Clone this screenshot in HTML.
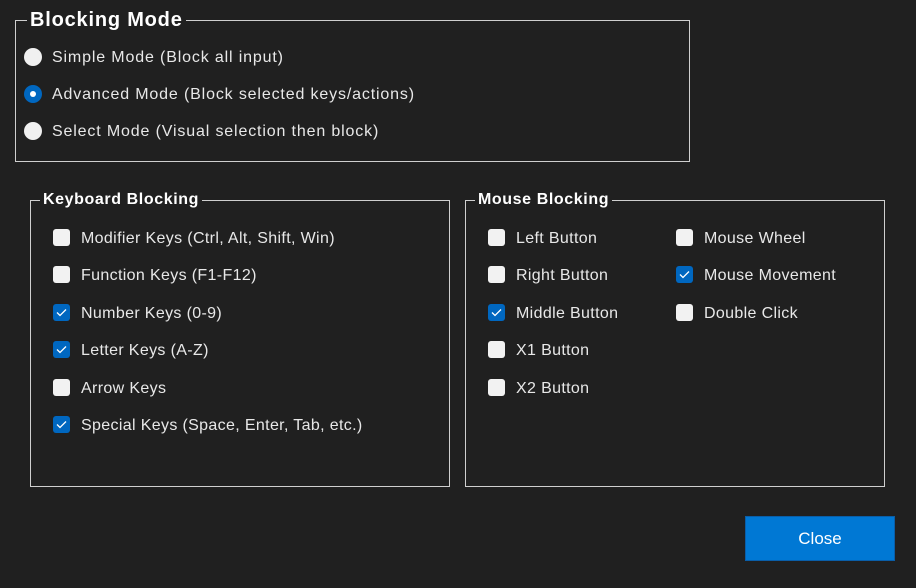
<!DOCTYPE html>
<html><head><style>
body{margin:0;width:916px;height:588px;background:#202020;font-family:"Liberation Sans",sans-serif;color:#e8e8e8;position:relative;overflow:hidden}
.box{position:absolute;border:1px solid #cfcfcf}
.t{position:absolute;background:#202020;color:#fff;font-weight:bold;padding:0 3px;white-space:nowrap}
.l{position:absolute;font-size:16px;letter-spacing:0.35px;white-space:nowrap;line-height:18px;margin-top:1px}
.rl{letter-spacing:0.85px}
.r{position:absolute;width:18px;height:18px;border-radius:50%;background:#f0f0f0}
.r.on{background:#0067c0}
.r.on::after{content:"";position:absolute;left:6px;top:6px;width:6px;height:6px;border-radius:50%;background:#fff}
.c{position:absolute;width:17px;height:17px;border-radius:3px;background:#f2f2f2}
.c.on{background:#0067c0}
.c.on svg{position:absolute;left:3px;top:4px}
.btn{position:absolute;left:745px;top:516px;width:150px;height:45px;background:#0078d4;border:1px solid #0a5ea8;box-sizing:border-box;color:#fff;font-size:17px;text-align:center;line-height:43px}
</style></head><body>
<div class="box" style="left:15px;top:20px;width:673px;height:140px"></div>
<div class="t" style="left:27px;top:9px;font-size:20px;letter-spacing:0.8px;line-height:23px">Blocking Mode</div>
<div class="r" style="left:24px;top:48px"></div><div class="l rl" style="left:52px;top:48px">Simple Mode (Block all input)</div>
<div class="r on" style="left:24px;top:85px"></div><div class="l rl" style="left:52px;top:85px">Advanced Mode (Block selected keys/actions)</div>
<div class="r" style="left:24px;top:122px"></div><div class="l rl" style="left:52px;top:122px">Select Mode (Visual selection then block)</div>

<div class="box" style="left:30px;top:200px;width:418px;height:285px"></div>
<div class="t" style="left:40px;top:191px;font-size:16px;letter-spacing:0.6px;line-height:18px">Keyboard Blocking</div>
<div class="box" style="left:465px;top:200px;width:418px;height:285px"></div>
<div class="t" style="left:475px;top:191px;font-size:16px;letter-spacing:0.6px;line-height:18px">Mouse Blocking</div>

<div class="c" style="left:53px;top:229px"></div><div class="l" style="left:81px;top:229px">Modifier Keys (Ctrl, Alt, Shift, Win)</div>
<div class="c" style="left:53px;top:266px"></div><div class="l" style="left:81px;top:266px">Function Keys (F1-F12)</div>
<div class="c on" style="left:53px;top:304px"><svg width="11" height="9"><path d="M1 4.5L4 7.5L10 1.5" stroke="#fff" stroke-width="1.3" fill="none"/></svg></div><div class="l" style="left:81px;top:304px">Number Keys (0-9)</div>
<div class="c on" style="left:53px;top:341px"><svg width="11" height="9"><path d="M1 4.5L4 7.5L10 1.5" stroke="#fff" stroke-width="1.3" fill="none"/></svg></div><div class="l" style="left:81px;top:341px">Letter Keys (A-Z)</div>
<div class="c" style="left:53px;top:379px"></div><div class="l" style="left:81px;top:379px">Arrow Keys</div>
<div class="c on" style="left:53px;top:416px"><svg width="11" height="9"><path d="M1 4.5L4 7.5L10 1.5" stroke="#fff" stroke-width="1.3" fill="none"/></svg></div><div class="l" style="left:81px;top:416px">Special Keys (Space, Enter, Tab, etc.)</div>

<div class="c" style="left:488px;top:229px"></div><div class="l" style="left:516px;top:229px">Left Button</div>
<div class="c" style="left:488px;top:266px"></div><div class="l" style="left:516px;top:266px">Right Button</div>
<div class="c on" style="left:488px;top:304px"><svg width="11" height="9"><path d="M1 4.5L4 7.5L10 1.5" stroke="#fff" stroke-width="1.3" fill="none"/></svg></div><div class="l" style="left:516px;top:304px">Middle Button</div>
<div class="c" style="left:488px;top:341px"></div><div class="l" style="left:516px;top:341px">X1 Button</div>
<div class="c" style="left:488px;top:379px"></div><div class="l" style="left:516px;top:379px">X2 Button</div>
<div class="c" style="left:676px;top:229px"></div><div class="l" style="left:704px;top:229px">Mouse Wheel</div>
<div class="c on" style="left:676px;top:266px"><svg width="11" height="9"><path d="M1 4.5L4 7.5L10 1.5" stroke="#fff" stroke-width="1.3" fill="none"/></svg></div><div class="l" style="left:704px;top:266px">Mouse Movement</div>
<div class="c" style="left:676px;top:304px"></div><div class="l" style="left:704px;top:304px">Double Click</div>

<div class="btn">Close</div>
</body></html>
